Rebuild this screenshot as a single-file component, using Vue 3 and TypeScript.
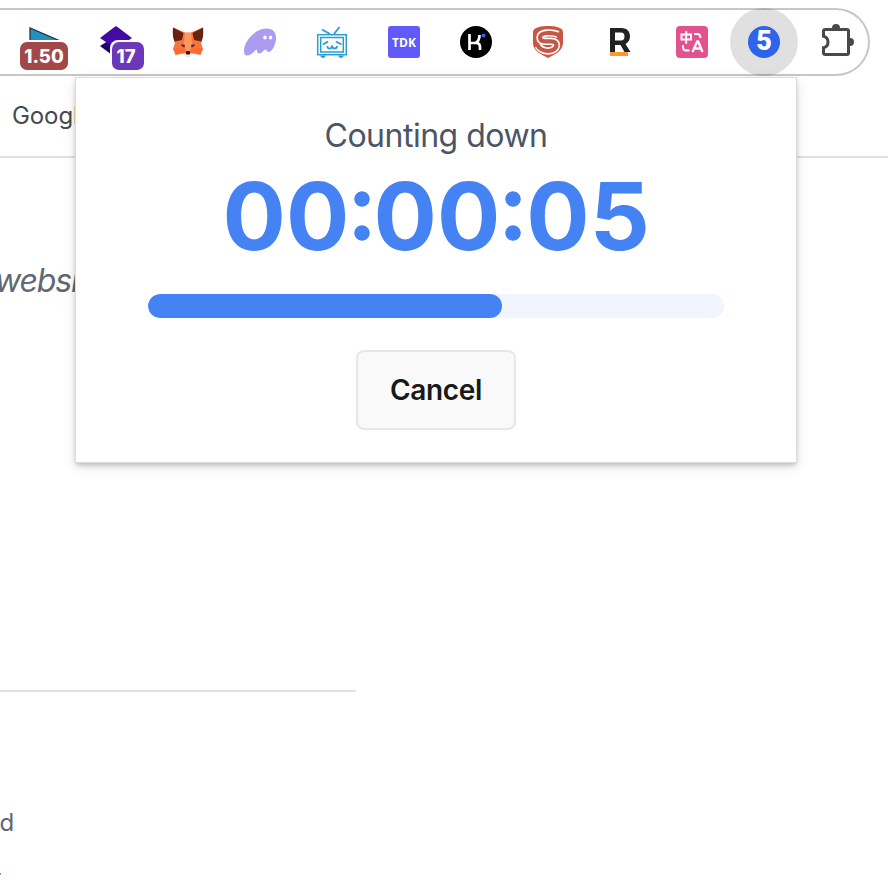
<script setup lang="ts">
import { computed, ref } from 'vue'

const remaining = ref(5)
const progress = ref(61.5)

const clock = computed(() => {
  const s = remaining.value
  return [Math.floor(s / 3600), Math.floor(s / 60) % 60, s % 60]
    .map((n) => String(n).padStart(2, '0'))
})
</script>

<template>
  <div class="screen">
    <header class="toolbar">
      <div class="ext">
        <svg viewBox="0 0 72 64">
          <path d="M22 18V32H52V31Z" fill="#258fc0" stroke="#20343e" stroke-width="1.3" />
          <rect x="11" y="30" width="50" height="30" rx="8" fill="#fff" />
        </svg>
        <span class="badge red">1.50</span>
      </div>
      <div class="ext">
        <svg viewBox="0 0 72 64">
          <path d="M20 36 36 26 52 36 36 48Z" fill="#22006b" />
          <path d="M20 28 34.500 17Q36 15.500 37.500 17L52 28 36 39Z" fill="#4509a5" />
          <rect x="30" y="30" width="36" height="32" rx="8" fill="#fff" />
        </svg>
        <span class="badge purple">17</span>
      </div>
      <div class="ext">
        <svg viewBox="0 0 72 64">
          <path d="M21 17.500 33 22.500H39L51 17.500 50.500 29 49 33 51 39 48.500 45 41 43.500 38 46H34L31 43.500 23.500 45 21 39 23 33 21.500 29Z" fill="#f6753c" />
          <path d="M21 17.500 31.500 23 30 30 22.500 31.500Q20 25 21 17.500Z M51 17.500 40.500 23 42 30 49.500 31.500Q52 25 51 17.500Z" fill="#68200f" />
          <path d="M33 23H39L40 33 38 41H34L32 33Z" fill="#ff9860" />
          <path d="M21.500 38 31 38.500 34 41 24 44.500Z M50.500 38 41 38.500 38 41 48 44.500Z" fill="#ff6833" />
          <path d="M29 34 33 35 32.500 37.500 30 36.500Z M43 34 39 35 39.500 37.500 42 36.500Z" fill="#682c27" />
          <path d="M31 44 34 42.500H38L41 44 38.500 47H33.500Z" fill="#eee9e9" />
          <path d="M34.500 41H37.500L38.500 43 37.500 44.500H34.500L33.500 43Z" fill="#301713" />
        </svg>
      </div>
      <div class="ext">
        <svg viewBox="0 0 72 64">
          <path d="M20 41C20 31 31 18.500 43 18.500C49 18.500 52 22.500 52 28C52 35 48 41.500 45 42C42.500 42 42.500 39.500 41.500 39.500C40 39.500 38 43.500 35 43.500C32.500 43.500 33.500 39.500 32.500 39.500C31 40 28 45.500 23 45.500C21 45.500 20 44 20 41Z" fill="#ab9cf1" />
          <ellipse cx="41" cy="27.500" rx="1.700" ry="2" fill="#fff" /><ellipse cx="46.500" cy="27.500" rx="1.700" ry="2" fill="#fff" />
        </svg>
      </div>
      <div class="ext">
        <svg viewBox="0 0 72 64" fill="none" stroke="#2b9dce" stroke-width="1.500">
          <rect x="21.700" y="24.700" width="28.600" height="20" />
          <rect x="24.700" y="27.500" width="22.600" height="14.500" />
          <path d="M26 19.500 34 24 M43.500 17 38 24 M27 34.500 32 31.500 M40 31.500 45.500 34.500" stroke-width="1.900" />
          <path d="M31.500 36Q31.500 39 34 38.500Q36 38 36 35.500Q36.500 38.500 38.500 38.500Q41 38.500 41 36" stroke-width="1.800" />
          <path d="M25 45.500Q27 48.500 29 45.500M43 45.500Q45 48.500 47 45.500" stroke-width="2" />
        </svg>
      </div>
      <div class="ext"><span class="tdk">TDK</span></div>
      <div class="ext">
        <svg viewBox="0 0 72 64">
          <circle cx="36" cy="32" r="16" />
          <path d="M29.500 24V40 M29.500 33H36Q40 33 40 37V40 M35.500 33Q39.500 31 39.500 25" fill="none" stroke="#fff" stroke-width="2.700" />
          <circle cx="43.500" cy="25.500" r="2" fill="#3b62f5" />
        </svg>
      </div>
      <div class="ext">
        <svg viewBox="0 0 72 64" fill="none">
          <path d="M36 16C42 16 51 17 51 22V33C51 41 42 45 36 48C30 45 21 41 21 33V22C21 17 30 16 36 16Z" fill="#c75745" />
          <path d="M46 24.500Q41 22.500 35 23Q28 23.500 28 27.500Q28 31.300 33 31.300H39Q44.500 31.500 44.500 35.500Q43.500 40.500 36 41Q29.500 41 26 35.500" stroke="#fff" stroke-width="7.400" />
          <path d="M48 25.300Q41 22.500 35 23Q28 23.500 28 27.500Q28 31.300 33 31.300H39Q44.500 31.500 44.500 35.500Q43.500 40.500 36 41Q28.500 41 24.500 34" stroke="#c75745" stroke-width="4.200" />
        </svg>
      </div>
      <div class="ext">
        <svg viewBox="0 0 72 64">
          <path d="M26 18H37.500C43 18 46 21.500 46 26.500C46 30 44 32.500 41.500 34L46.500 42H40.500L36.500 35H31V42H26ZM31 22.500V30.500H37Q40.500 30.500 40.500 26.500Q40.500 22.500 37 22.500Z" fill="#202124" fill-rule="evenodd" />
          <rect x="26" y="42" width="18" height="4" fill="#ff9827" />
        </svg>
      </div>
      <div class="ext">
        <svg viewBox="0 0 72 64">
          <rect x="20" y="16" width="32" height="32" rx="4" fill="#e3518f" />
          <g fill="none" stroke="#fff" stroke-width="1.900">
            <path d="M25.500 24.500H35V29.500H25.500Z M30.200 21V34 M38 24H41Q44.500 24 44.500 28 M27 35V37Q27 40.500 30 40.500H33.500" />
            <path d="M36.500 42 41.200 31.500H42.200L46.500 42 M38.500 38.500H45" stroke-width="2.300" />
          </g>
        </svg>
      </div>
      <div class="ext active"><span class="count">{{ remaining }}</span></div>
      <div class="ext puzzle">
        <svg viewBox="0 0 72 64">
          <path d="M24.500 19.500H46Q47.500 19.500 47.500 21V43Q47.500 44.500 46 44.500H24.500Q22.500 44.500 22.500 43V37.800C28.500 36.500 28.500 27.500 22.500 26.200V21Q22.500 19.500 24.500 19.500Z" fill="none" stroke="#47494a" stroke-width="3" />
          <path d="M31 19V18A4 4 0 0 1 39 18V19ZM48 28H49A4 4 0 0 1 49 36H48Z" fill="#47494a" />
        </svg>
      </div>
    </header>

    <nav class="bookmarks"><span>Google</span></nav>

    <main class="page">
      <p class="site">website</p>
      <hr class="rule" />
      <p class="tail">d</p>
      <div class="link-edge"></div>
    </main>

    <section class="popup">
      <h1 class="title">Counting down</h1>
      <div class="clock">
        <template v-for="(part, i) in clock" :key="i">
          <span v-if="i" class="colon"></span><span class="digits">{{ part }}</span>
        </template>
      </div>
      <div class="track"><div class="fill" :style="{ width: progress + '%' }"></div></div>
      <button class="cancel" type="button">Cancel</button>
    </section>
  </div>
</template>

<style>
body { margin: 0; background: #fff; }
</style>

<style scoped>
.screen {
  position: relative;
  box-sizing: border-box;
  width: 888px;
  height: 888px;
  padding-top: 8px;
  overflow: hidden;
  background: #fff;
  font-family: Inter, "Liberation Sans", sans-serif;
}
.toolbar {
  box-sizing: border-box;
  display: flex;
  width: 870px;
  height: 68px;
  padding-left: 8px;
  border: 2px solid #c7c7c7;
  border-left: 0;
  border-radius: 0 34px 34px 0;
}
.ext {
  position: relative;
  display: flex;
  flex: 0 0 72px;
  height: 64px;
  align-items: center;
  justify-content: center;
}
.ext svg { display: block; width: 72px; height: 64px; }
.badge {
  position: absolute;
  top: 32px;
  box-sizing: border-box;
  height: 28px;
  border-radius: 7px;
  color: #fff;
  font-size: 18.500px;
  font-weight: 800;
  line-height: 28px;
  text-align: center;
}
.red { left: 12px; width: 48px; background: #a34848; }
.purple { left: 32px; width: 32px; padding-right: 4px; background: #6b38b9; }
.tdk {
  width: 32px;
  height: 32px;
  border-radius: 3px;
  background: #6259fa;
  color: #fff;
  font: 700 12px/33px "Open Sans", sans-serif;
  text-align: center;
}
.active::before {
  content: "";
  position: absolute;
  inset: -2px 2px;
  border-radius: 50%;
  background: rgba(0, 0, 0, .12);
}
.count {
  position: relative;
  width: 32px;
  height: 32px;
  border-radius: 50%;
  background: #2e64e9;
  color: #fff;
  font: 900 27px/31px Roboto, sans-serif;
  text-align: center;
}
.puzzle { margin-left: 1px; }
.bookmarks {
  box-sizing: border-box;
  display: flex;
  height: 82px;
  padding: 25px 0 0 12px;
  border-bottom: 2px solid #e0e0e0;
  color: #47494b;
  font-size: 24px;
  font-weight: 400;
  letter-spacing: -.1px;
  line-height: 30px;
}
.page { display: flex; flex-direction: column; align-items: flex-start; color: #606873; }
.site {
  height: 40px;
  margin: 103px 0 0 -5px;
  font-size: 32px;
  font-style: italic;
  font-weight: 430;
  letter-spacing: -1.100px;
  line-height: 40px;
}
.rule { width: 356px; height: 2px; margin: 389px 0 0; border: 0; background: #dfe1e2; }
.tail { margin: 116px 0 0 -.5px; font-size: 24px; font-weight: 430; line-height: 30px; }
.link-edge { width: 1px; height: 2px; margin-top: 35px; background: #669cf4; }
.popup {
  position: absolute;
  top: 78px;
  left: 76px;
  box-sizing: border-box;
  display: flex;
  width: 720px;
  height: 384px;
  flex-direction: column;
  align-items: center;
  padding-top: 37px;
  background: #fff;
  box-shadow: 0 0 0 1px #dadddc, 0 3px 5px rgba(0, 0, 0, .22), 0 4px 14px rgba(0, 0, 0, .12);
}
.title {
  height: 40px;
  margin: 0;
  color: #4b5566;
  font-size: 32px;
  font-weight: 420;
  letter-spacing: -.5px;
  line-height: 41px;
}
.clock {
  display: flex;
  height: 96px;
  margin-top: 13px;
  padding-left: 2px;
  color: #4582f4;
  font-size: 94px;
  font-weight: 700;
  line-height: 97px;
}
.digits { display: block; width: 127.500px; text-align: center; white-space: nowrap; }
.colon {
  width: 23.500px;
  background: radial-gradient(circle, currentColor 7.300px, transparent 8px) 50% 23px / 16px 16px no-repeat,
    radial-gradient(circle, currentColor 7.300px, transparent 8px) 50% 57px / 16px 16px no-repeat;
}
.track { width: 576px; height: 24px; margin-top: 30px; overflow: hidden; border-radius: 12px; background: #f0f5ff; }
.fill { height: 24px; border-radius: 12px; background: #4582f4; }
.cancel {
  box-sizing: border-box;
  width: 160px;
  height: 80px;
  margin-top: 32px;
  padding: 0;
  border: 2px solid #e7e7e7;
  border-radius: 8px;
  background: #f9f9f9;
  color: #18191a;
  font: 600 28px/77px Inter, sans-serif;
  letter-spacing: -.3px;
}
</style>
